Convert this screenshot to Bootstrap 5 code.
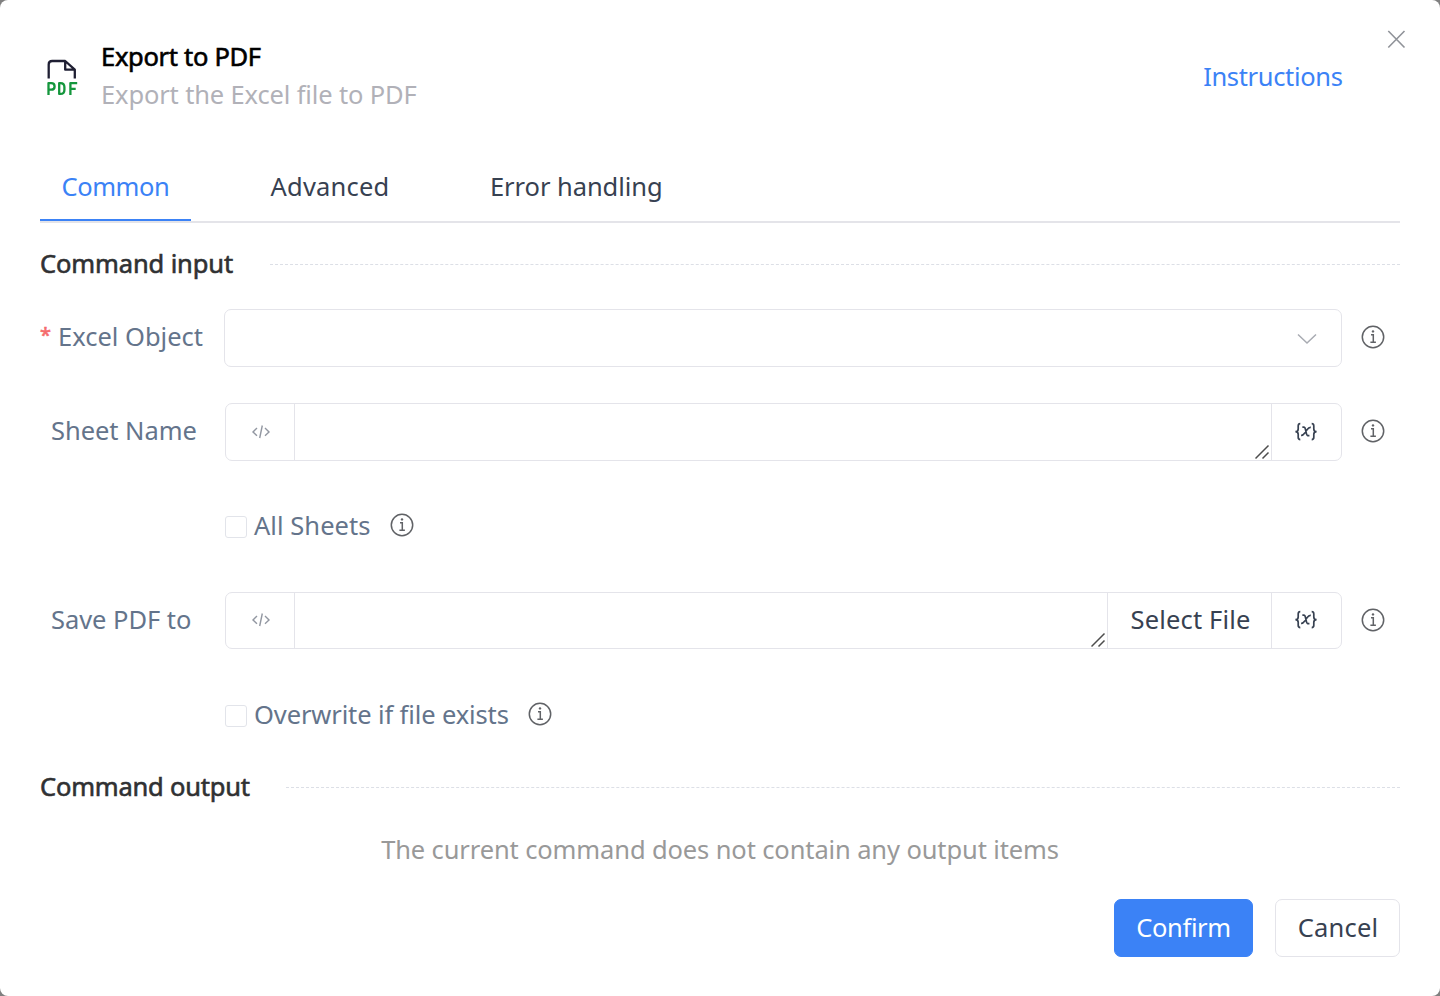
<!DOCTYPE html>
<html lang="en">
<head>
<meta charset="utf-8">
<meta name="viewport" content="width=device-width, initial-scale=1">
<title>Export to PDF</title>
<link href="https://cdn.jsdelivr.net/npm/bootstrap@5.3.0/dist/css/bootstrap.min.css" rel="stylesheet">
<style>
body{background:#808080;font-family:"Noto Sans","Open Sans",sans-serif;font-size:25.5px;line-height:38px;color:#374151;height:996px;overflow:hidden}
.dialog{height:996px;background:#fff;border-radius:8px;padding:0 40px}
.t{white-space:nowrap;display:block;line-height:36px;padding-bottom:2px}
.head{height:155px;padding-top:38px}
.titles{margin-left:23px}
.ttl{color:#000;-webkit-text-stroke:.6px #000;letter-spacing:-.3px}
.sub{color:#b1b1b8;letter-spacing:-.14px}
.help{color:#3b82f6;text-decoration:none;margin-top:20px;margin-right:42.5px;letter-spacing:-.35px}
.x-btn{background:none;border:0;padding:0;width:24px;height:24px;line-height:0;margin:-11px -9px 0 0}
.tabs{height:68px;border-bottom:2px solid #e4e4e9;gap:58px}
.tabs .nav-link{height:66px;padding:13px 0 0 21.500px;border:0;border-radius:0;color:#374151;width:151px;letter-spacing:-.45px}
.tabs .nav-link.active{color:#3b82f6;border-bottom:2px solid #3b82f6}
.tabs .nav-adv{width:162px;letter-spacing:.2px}
.tabs .nav-err{width:216px;padding-left:21px;letter-spacing:-.06px}
.sec{height:38px;color:#303133}
.sec .t{-webkit-text-stroke:.6px #303133;letter-spacing:-.12px;width:230px}
.sec .s2{width:246px;letter-spacing:-.2px}
.dash{border-top:1px dashed #dcdfe6;height:1px}
.lab{width:185px;color:#64748b}
.lab .t{line-height:35px;padding-bottom:3px}
.lab.ind{padding-left:11px;letter-spacing:-.05px}
.star{color:#f56c6c;width:18px;font-size:20px;line-height:31px;-webkit-text-stroke:.6px #f56c6c}
.box{border:1px solid #e4e4ea;border-radius:7px;height:58px}
.box.low{height:57px}
.cell{border-left:1px solid #e4e4ea}
.code{width:68px;padding-left:2px}
.low .code,.low .var{padding-bottom:2px}
.var{width:70px;padding-right:1px}
.info{width:58px;padding:0 0 2px 18.500px;line-height:0}
.form-check-input.chk{width:22px;height:22px;border:1px solid #e2e4ea;border-radius:3px;margin:1px 7px 0 0}
.chkrow{padding-left:185px;color:#64748b;height:38px}
.chkrow .info{padding-left:19px}
.c1{letter-spacing:.05px}
.c2{letter-spacing:-.12px}
.out{color:#999}
.out .t{letter-spacing:-.12px}
.b{height:58px;border-radius:7px;padding:0;font-size:25.5px;line-height:38px;--bs-btn-border-width:1px}
.b1{background:#3b82f6;border-color:#3b82f6;color:#fff;width:139px;letter-spacing:-.35px}
.b2{background:#fff;border-color:#e4e4ea;color:#374151;width:125px;padding-left:1px;letter-spacing:.2px}
svg{flex:none}
</style>
</head>
<body>
<svg width="0" height="0" class="position-absolute">
  <symbol id="i-info" viewBox="0 0 24 24"><g fill="none" stroke="#606266" stroke-width="1.500"><circle cx="12" cy="12" r="10.700"/><path d="M10 9.800h2.300v7.400M9.400 17.300h5.500"/></g><circle cx="12" cy="6.400" r="1.200" fill="#606266"/></symbol>
  <symbol id="i-code" viewBox="0 0 20 16"><path d="M6 4 2 8l4 3.700M14 4l4 4-4 3.700M11.300 1.500 8.700 14" fill="none" stroke="#9297a1" stroke-width="1.400"/></symbol>
  <symbol id="i-grip" viewBox="0 0 16 16"><path d="M.5 14.500 13.500 1.500M7.500 14.500 13.500 8.500" fill="none" stroke="#4d4d4d" stroke-width="1.500"/></symbol>
  <symbol id="i-var" viewBox="0 0 24 20"><g fill="none" stroke="#374151" stroke-width="1.700"><path d="M6.300 1.600C4.500 1.600 4.200 2.400 4.200 3.900v3C4.200 8.800 3.400 9.600 1.400 9.600c2 0 2.800.8 2.800 2.700v3c0 1.500.3 2.300 2.100 2.300M17.700 1.600c1.800 0 2.100.8 2.100 2.300v3c0 1.900.8 2.700 2.800 2.700-2 0-2.800.8-2.800 2.700v3c0 1.500-.3 2.300-2.100 2.300"/><path d="M8.300 5.300c1.800-.5 2.600 0 3 1.600l1.200 5c.4 1.600 1.200 2.100 2.900 1.500M16.800 5.300c-1.500-.2-2.500.6-4 2.700L11 10.700c-1.500 2-2.300 2.900-3.900 2.700"/></g></symbol>
</svg>
<main class="dialog d-flex flex-column">
  <header class="head d-flex align-items-start">
    <svg width="38" height="40" viewBox="0 0 38 40" style="margin-top:21px"><path d="M8.700 19.500V5.500q0-3.500 3.500-3.500h13l9.600 8.700v8.800M25.200 2v8.700h9.600" fill="none" stroke="#1f1f33" stroke-width="2.300" stroke-linejoin="round"/>
    <g fill="none" stroke="#14963c" stroke-width="2.300" stroke-linejoin="round"><path d="M8.500 36V24.100h2.700q3.400 0 3.400 3.300t-3.400 3.300H8.500M19.200 24.100v10.800h1.200q4 0 4-4v-2.800q0-4-4-4zM30.400 36V24.100h6.800M30.400 29.800h5.300"/></g></svg>
    <div class="titles d-flex flex-column align-items-start flex-grow-1"><span class="t ttl">Export to PDF</span><span class="t sub">Export the Excel file to PDF</span></div>
    <a class="help t" href="#">Instructions</a>
    <button class="x-btn" aria-label="Close"><svg width="24" height="24" viewBox="0 0 24 24"><path d="M3.300 4 19.500 20.500M19.500 4 3.300 20.500" stroke="#909399" stroke-width="1.600"/></svg></button>
  </header>
  <nav class="nav tabs flex-nowrap">
    <a class="nav-link active" href="#"><span class="t">Common</span></a><a class="nav-link nav-adv" href="#"><span class="t">Advanced</span></a><a class="nav-link nav-err" href="#"><span class="t">Error handling</span></a>
  </nav>
  <div class="sec d-flex align-items-center" style="margin-top:22px"><span class="t s1">Command input</span><div class="dash flex-grow-1"></div></div>
  <div class="d-flex align-items-center" style="margin-top:26px">
    <label class="lab d-flex" style="width:184px"><span class="star">*</span><span class="t">Excel Object</span></label>
    <div class="box flex-grow-1 d-flex align-items-center justify-content-end"><svg width="22" height="14" viewBox="0 0 22 14" style="margin-right:23.5px"><path d="M2 3.500l9 8.500L20 3.500" fill="none" stroke="#a8abb2" stroke-width="1.500"/></svg></div>
    <span class="info"><svg width="24" height="24"><use href="#i-info"/></svg></span>
  </div>
  <div class="d-flex align-items-center" style="margin-top:36px">
    <label class="lab ind"><span class="t">Sheet Name</span></label>
    <div class="box flex-grow-1 d-flex">
      <div class="code d-flex align-items-center justify-content-center"><svg width="20" height="16"><use href="#i-code"/></svg></div>
      <div class="cell flex-grow-1 d-flex align-items-end justify-content-end"><svg width="16" height="16"><use href="#i-grip"/></svg></div>
      <div class="cell var d-flex align-items-center justify-content-center"><svg width="24" height="20"><use href="#i-var"/></svg></div>
    </div>
    <span class="info"><svg width="24" height="24"><use href="#i-info"/></svg></span>
  </div>
  <div class="chkrow d-flex align-items-center" style="margin-top:46px"><input type="checkbox" class="form-check-input chk"><span class="t c1">All Sheets</span><span class="info"><svg width="24" height="24"><use href="#i-info"/></svg></span></div>
  <div class="d-flex align-items-center" style="margin-top:47px">
    <label class="lab ind"><span class="t">Save PDF to</span></label>
    <div class="box low flex-grow-1 d-flex">
      <div class="code d-flex align-items-center justify-content-center"><svg width="20" height="16"><use href="#i-code"/></svg></div>
      <div class="cell flex-grow-1 d-flex align-items-end justify-content-end"><svg width="16" height="16"><use href="#i-grip"/></svg></div>
      <div class="cell d-flex align-items-center justify-content-center" style="width:164px"><span class="t pb-1 ps-1" style="letter-spacing:.15px;margin-left:-2px">Select File</span></div>
      <div class="cell var d-flex align-items-center justify-content-center"><svg width="24" height="20"><use href="#i-var"/></svg></div>
    </div>
    <span class="info"><svg width="24" height="24"><use href="#i-info"/></svg></span>
  </div>
  <div class="chkrow d-flex align-items-center" style="margin-top:47px"><input type="checkbox" class="form-check-input chk"><span class="t c2">Overwrite if file exists</span><span class="info"><svg width="24" height="24"><use href="#i-info"/></svg></span></div>
  <div class="sec d-flex align-items-center" style="margin-top:34px"><span class="t s2">Command output</span><div class="dash flex-grow-1"></div></div>
  <div class="text-center out" style="margin-top:25px"><span class="t">The current command does not contain any output items</span></div>
  <footer class="d-flex justify-content-end" style="margin-top:30px;gap:22px"><button class="btn b b1"><span class="t">Confirm</span></button><button class="btn b b2"><span class="t">Cancel</span></button></footer>
</main>
<script src="https://cdn.jsdelivr.net/npm/bootstrap@5.3.0/dist/js/bootstrap.bundle.min.js"></script>
</body>
</html>
